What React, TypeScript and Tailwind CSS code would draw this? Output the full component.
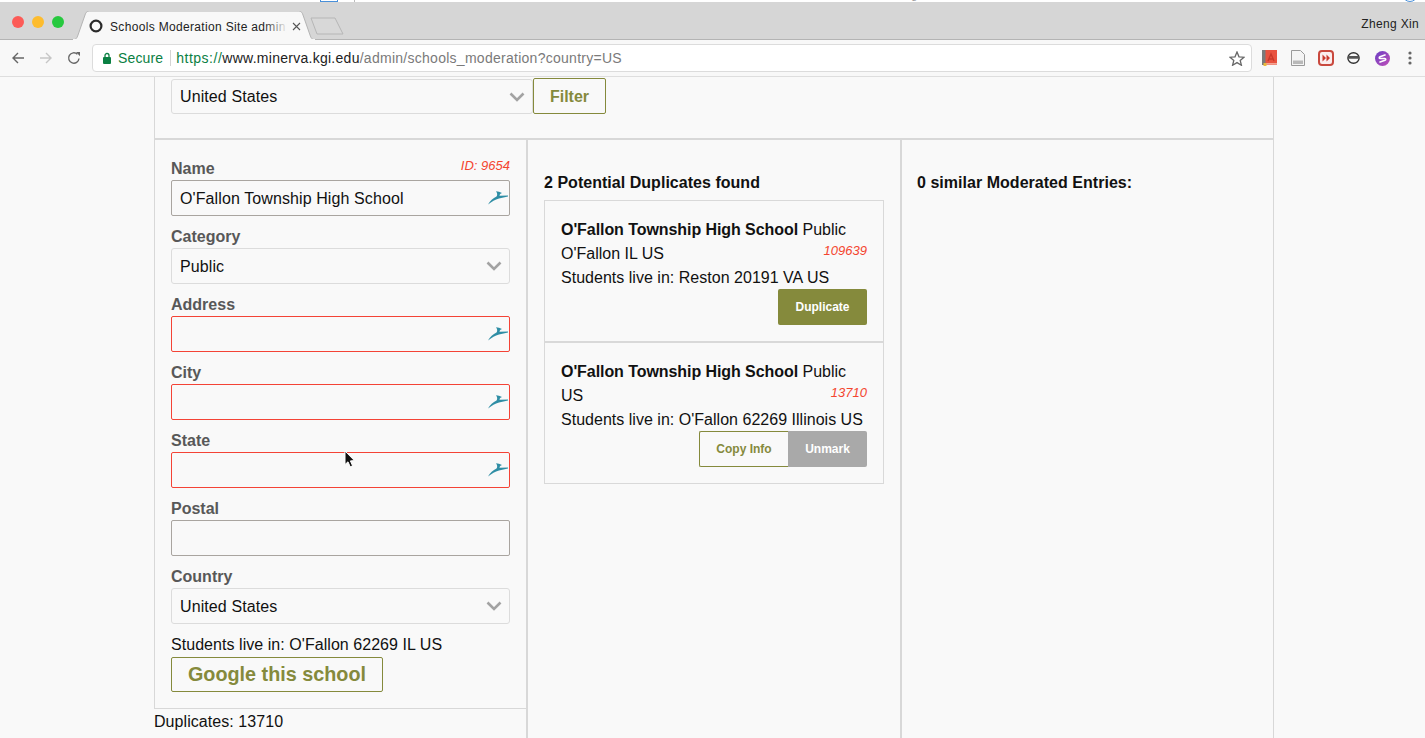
import React from "react";

const FONT = "font-['Liberation_Sans',Arial,sans-serif]";

function Deer() {
  return (
    <svg width="20" height="14" viewBox="0 0 20 14" className="absolute right-[2px] top-[11px]">
      <path d="M0 13.5 C2 10 5 7 8.5 5.5 C9.5 4.5 9.5 2 8 0.3 C10 0.6 12 1 14 2 C12.5 2.5 11.5 3.5 11.5 4.8 L20 4.6 L20 5.6 L11 7.5 C7 8.5 4 10.5 0 13.5 Z" fill="#2f8ea5" />
    </svg>
  );
}

function Chevron() {
  return (
    <svg width="16" height="10" viewBox="0 0 16 10" className="absolute right-[8px] top-[13px] pointer-events-none">
      <path d="M1.5 1.5 L8 8 L14.5 1.5" fill="none" stroke="#a3a3a3" strokeWidth="2.6" />
    </svg>
  );
}

function Label({ children }: { children: React.ReactNode }) {
  return <div className="h-[32px] pt-[11px] text-[16px] leading-[20px] font-bold text-[#585858]">{children}</div>;
}

function TextField({ value = "", red = false, deer = true, dark = false }: { value?: string; red?: boolean; deer?: boolean; dark?: boolean }) {
  const border = red ? "border-[#f44336]" : dark ? "border-[#a9a5a0]" : "border-[#b5b5b5]";
  return (
    <div className="relative h-[36px]">
      <input
        readOnly
        value={value}
        className={`w-full h-full bg-[#f9f9f9] border rounded-[2px] pl-[8px] pr-[8px] pt-[2px] text-[16px] tracking-[0.1px] text-[#111] outline-none ${border}`}
      />
      {deer && <Deer />}
    </div>
  );
}

function SelectField({ value }: { value: string }) {
  return (
    <div className="relative h-[36px]">
      <select
        value={value}
        onChange={() => {}}
        className="w-full h-full appearance-none bg-[#f9f9f9] border border-[#dcdcdc] rounded-[3px] pl-[8px] pr-[8px] pt-[2px] text-[16px] tracking-[0.1px] text-[#111] outline-none"
      >
        <option>{value}</option>
      </select>
      <Chevron />
    </div>
  );
}

function TabBar() {
  return (
    <div className="h-[38px] bg-[#d6d6d6] border-b border-[#b4b4b4] flex items-end relative">
      <div className="flex gap-[8px] ml-[12px] self-start mt-[14px]">
        <div className="w-[12px] h-[12px] rounded-full bg-[#fc5b57]" />
        <div className="w-[12px] h-[12px] rounded-full bg-[#fdbc2e]" />
        <div className="w-[12px] h-[12px] rounded-full bg-[#27c93f]" />
      </div>
      <div className="relative ml-[8px] w-[244px] h-[29px] -mb-[1px] flex items-center pl-[17px]">
        <svg width="244" height="29" viewBox="0 0 244 29" className="absolute inset-0">
          <path d="M0 29 C4 29 5 27 6 24 L13 4 C14 1 15 0 19 0 L225 0 C229 0 230 1 231 4 L238 24 C239 27 240 29 244 29 Z" fill="#f8f8f8" stroke="#b4b4b4" />
          <rect x="1" y="28" width="242" height="2" fill="#f8f8f8" />
        </svg>
        <svg width="14" height="14" viewBox="0 0 14 14" className="relative shrink-0">
          <circle cx="7" cy="7" r="5.4" fill="none" stroke="#2a2a2a" strokeWidth="2.2" />
        </svg>
        <div className="relative ml-[7px] pt-[2px] w-[178px] overflow-hidden whitespace-nowrap text-[12px] text-[#222] tracking-[0.33px]">
          Schools Moderation Site admin
          <div className="absolute right-0 top-0 bottom-0 w-[24px] bg-gradient-to-r from-transparent to-[#f8f8f8]" />
        </div>
        <svg width="9" height="9" viewBox="0 0 9 9" className="relative ml-[4px] mt-[1px]">
          <path d="M1 1 L8 8 M8 1 L1 8" stroke="#555" strokeWidth="1.1" />
        </svg>
      </div>
      <svg width="34" height="18" viewBox="0 0 34 18" className="ml-[-6px] mb-[4px]">
        <path d="M1 1 H25 L33 17 H7 Z" fill="#d8d8d8" stroke="#b6b6b6" />
      </svg>
      <div className="ml-auto self-start mt-[14px] mr-[6px] text-[12px] leading-[16px] text-[#222] tracking-[0.33px]">Zheng Xin</div>
    </div>
  );
}

function ExtensionIcons() {
  return (
    <div className="flex items-center">
      <svg width="15" height="16" viewBox="0 0 15 16" className="ml-[10px]">
        <rect x="0" y="0" width="15" height="15" fill="#e8523f" />
        <rect x="0" y="0" width="3.5" height="15" fill="#7a7a7a" />
        <rect x="3.5" y="13.2" width="11.5" height="1.4" fill="#f5b7a8" />
        <rect x="1.5" y="13" width="3" height="3" fill="#e9b93a" />
        <path d="M6 11 L9 4 L12 11 M7 9 H11" fill="none" stroke="#c9382a" strokeWidth="1.4" />
      </svg>
      <svg width="14" height="16" viewBox="0 0 14 16" className="ml-[14px]">
        <path d="M0.5 0.5 H9.5 L13.5 4.5 V15.5 H0.5 Z" fill="#f4f4f4" stroke="#9a9a9a" />
        <rect x="2" y="10.5" width="10" height="3.5" fill="#b9b9b9" />
      </svg>
      <svg width="16" height="16" viewBox="0 0 16 16" className="ml-[13px]">
        <rect x="1" y="1" width="14" height="14" rx="3" fill="#fbeeee" stroke="#c9493e" strokeWidth="2" />
        <path d="M4.5 4.5 L8 8 L4.5 11.5 Z M8.5 4.5 L12 8 L8.5 11.5 Z" fill="#c9392e" />
      </svg>
      <svg width="13" height="12" viewBox="0 0 13 12" className="ml-[13px]">
        <ellipse cx="6.5" cy="6" rx="5.6" ry="5.2" fill="none" stroke="#333" strokeWidth="1.4" />
        <rect x="1" y="4" width="11" height="2.8" rx="1.2" fill="#555" />
      </svg>
      <svg width="15" height="15" viewBox="0 0 15 15" className="ml-[15px]">
        <defs>
          <linearGradient id="sg" x1="0" y1="0" x2="1" y2="1">
            <stop offset="0" stopColor="#6a3fc4" />
            <stop offset="1" stopColor="#c14fb8" />
          </linearGradient>
        </defs>
        <circle cx="7.5" cy="7.5" r="7.5" fill="url(#sg)" />
        <path d="M10.6 3.8 L5 5.8 C3.8 6.3 4 7.4 5.2 7.5 L9.8 7.6 C11 7.8 11.2 8.8 10 9.3 L4.4 11.2" fill="none" stroke="#fff" strokeWidth="1.5" />
      </svg>
      <svg width="4" height="14" viewBox="0 0 4 14" className="ml-[18px]">
        <circle cx="2" cy="2" r="1.6" fill="#666" />
        <circle cx="2" cy="7" r="1.6" fill="#666" />
        <circle cx="2" cy="12" r="1.6" fill="#666" />
      </svg>
    </div>
  );
}

function Toolbar() {
  return (
    <div className="h-[37px] bg-[#f8f8f8] border-b border-[#dedede] flex items-center">
      <svg width="14" height="14" viewBox="0 0 14 14" className="ml-[11px]">
        <path d="M13 7 H2 M7 2 L2 7 L7 12" fill="none" stroke="#666" strokeWidth="1.4" />
      </svg>
      <svg width="14" height="14" viewBox="0 0 14 14" className="ml-[14px]">
        <path d="M1 7 H12 M7 2 L12 7 L7 12" fill="none" stroke="#c6c6c6" strokeWidth="1.4" />
      </svg>
      <svg width="14" height="14" viewBox="0 0 14 14" className="ml-[14px]">
        <path d="M12 7.5 A5.2 5.2 0 1 1 10.4 3.2" fill="none" stroke="#666" strokeWidth="1.4" />
        <path d="M9 0.5 H13 V4.8 Z" fill="#666" transform="translate(0 0.5)" />
      </svg>
      <div className="ml-[11px] w-[1160px] h-[28px] bg-white border border-[#dcdcdc] rounded-[4px] flex items-center text-[14px] whitespace-nowrap">
        <svg width="10" height="12" viewBox="0 0 10 12" className="ml-[9px]">
          <rect x="1" y="5" width="8" height="7" rx="1" fill="#0b8043" />
          <path d="M3 5 V3.5 A2 2 0 0 1 7 3.5 V5" fill="none" stroke="#0b8043" strokeWidth="1.3" />
        </svg>
        <span className="ml-[6px] text-[#0b8043] tracking-[0.15px]">Secure</span>
        <div className="w-px h-[16px] bg-[#d4d4d4] ml-[7px] mr-[5px]" />
        <span className="text-[#0b8043] tracking-[0.5px]">https://</span>
        <span className="text-[#222] tracking-[0.27px]">www.minerva.kgi.edu</span>
        <span className="text-[#7a7a7a] tracking-[0.27px]">/admin/schools_moderation?country=US</span>
        <svg width="16" height="15" viewBox="0 0 16 15" className="ml-auto mr-[6px]">
          <path d="M8 1 L10 5.8 L15 6.2 L11.2 9.4 L12.4 14.2 L8 11.6 L3.6 14.2 L4.8 9.4 L1 6.2 L6 5.8 Z" fill="none" stroke="#666" strokeWidth="1.3" />
        </svg>
      </div>
      <ExtensionIcons />
    </div>
  );
}

function DupCard({
  id,
  line2,
  live,
  children,
}: {
  id: string;
  line2: string;
  live: string;
  children: React.ReactNode;
}) {
  return (
    <div className="border border-[#d9d9d9] pt-[17px] pb-[16px] pl-[16px] pr-[16px] text-[16px] leading-[24px] text-[#111]">
      <div>
        <b className="tracking-[-0.07px]">O'Fallon Township High School</b> Public
      </div>
      <div className="flex justify-between">
        <span>{line2}</span>
        <span className="text-[13px] leading-[18px] italic text-[#f4452f]">{id}</span>
      </div>
      <div className="whitespace-nowrap tracking-[0.02px]">Students live in: {live}</div>
      <div className="flex justify-end -mt-[1px]">{children}</div>
    </div>
  );
}

export default function App() {
  return (
    <div className={`relative h-[738px] w-[1425px] overflow-hidden bg-[#f9f9f9] ${FONT}`}>
      <div className="h-[2px] bg-white relative overflow-hidden">
        <div className="absolute left-[320px] -top-[16px] w-[18px] h-[18px] border border-[#4a90d9]" />
        <div className="absolute left-[354px] top-0 w-px h-[2px] bg-[#bbb]" />
        <div className="absolute left-[1402px] -top-[14px] w-[16px] h-[16px] rounded-full border border-[#4a90d9]" />
        <div className="absolute left-[860px] -top-[12px] text-[11px] leading-[14px] text-[#999]">Active Image</div>
      </div>
      <TabBar />
      <Toolbar />

      <div className="ml-[154px] w-[1120px] h-[661px] flex flex-col">
        <div className="h-[63px] shrink-0 border-l border-r border-b-2 border-l-[#d8d8d8] border-r-[#d8d8d8] border-b-[#d8d8d8] pl-[16px] flex items-start">
          <div className="relative w-[362px] h-[35px] mt-[2px]">
            <select
              value="United States"
              onChange={() => {}}
              className="w-full h-full appearance-none bg-[#f9f9f9] border border-[#dcdcdc] rounded-[3px] pl-[8px] pr-[8px] text-[16px] tracking-[0.1px] text-[#111] outline-none"
            >
              <option>United States</option>
            </select>
            <Chevron />
          </div>
          <button className="h-[36px] mt-[1px] pt-[2px] w-[73px] border border-[#858a3c] rounded-[2px] text-[16px] font-bold text-[#858a3c] bg-[#f9f9f9]">Filter</button>
        </div>

        <div className="flex flex-1 min-h-0">
          <div className="w-[374px] shrink-0 border-r-2 border-r-[#d8d8d8]">
            <div className="h-[569px] border-l border-b border-[#d8d8d8] pl-[16px] pr-[16px]">
              <div className="flex justify-between h-[40px] w-[339px] items-start">
                <div className="mt-[19px] text-[16px] leading-[20px] font-bold text-[#585858]">Name</div>
                <div className="mt-[18px] text-[13px] leading-[16px] italic text-[#f4452f]">ID: 9654</div>
              </div>
              <div className="w-[339px]">
                <TextField value="O'Fallon Township High School" dark />
                <Label>Category</Label>
                <SelectField value="Public" />
                <Label>Address</Label>
                <TextField red />
                <Label>City</Label>
                <TextField red />
                <Label>State</Label>
                <TextField red />
                <Label>Postal</Label>
                <TextField deer={false} dark />
                <Label>Country</Label>
                <SelectField value="United States" />
                <div className="mt-[9px] text-[16px] leading-[24px] tracking-[0.05px] text-[#111] whitespace-nowrap">Students live in: O'Fallon 62269 IL US</div>
                <button className="h-[35px] pt-[1px] w-[212px] border border-[#858a3c] rounded-[2px] text-[19.8px] font-bold text-[#858a3c] bg-[#f9f9f9]">Google this school</button>
              </div>
            </div>
            <div className="pt-[1px] text-[16px] leading-[24px] tracking-[0.06px] text-[#111]">Duplicates: 13710</div>
          </div>

          <div className="w-[374px] shrink-0 border-r-2 border-r-[#d8d8d8] pl-[16px] pr-[16px]">
            <div className="mt-[33px] h-[27px] text-[16px] leading-[20px] tracking-[0.03px] font-bold text-[#111]">2 Potential Duplicates found</div>
            <div className="w-[340px]">
              <DupCard id="109639" line2="O'Fallon IL US" live="Reston 20191 VA US">
                <button className="h-[36px] w-[89px] rounded-[2px] bg-[#858a3c] text-white text-[12px] font-bold">Duplicate</button>
              </DupCard>
              <DupCard id="13710" line2="US" live="O'Fallon 62269 Illinois US">
                <button className="h-[36px] w-[89px] border border-[#858a3c] border-r-0 rounded-l-[2px] text-[#858a3c] text-[12px] font-bold bg-[#f9f9f9]">Copy Info</button>
                <button className="h-[36px] w-[79px] rounded-r-[2px] bg-[#a9a9a9] text-white text-[12px] font-bold">Unmark</button>
              </DupCard>
            </div>
          </div>

          <div className="flex-1 border-r border-r-[#d8d8d8] pl-[15px]">
            <div className="mt-[33px] text-[16px] leading-[20px] tracking-[0.03px] font-bold text-[#111]">0 similar Moderated Entries:</div>
          </div>
        </div>
      </div>

      <svg width="14" height="20" viewBox="0 0 14 20" className="absolute left-[343px] top-[450px]">
        <path d="M2 1 L2 14.5 L5 11.8 L7.2 16.8 L9.6 15.8 L7.4 10.9 L11.4 10.6 Z" fill="#111" stroke="#fff" strokeWidth="1" />
      </svg>
    </div>
  );
}
